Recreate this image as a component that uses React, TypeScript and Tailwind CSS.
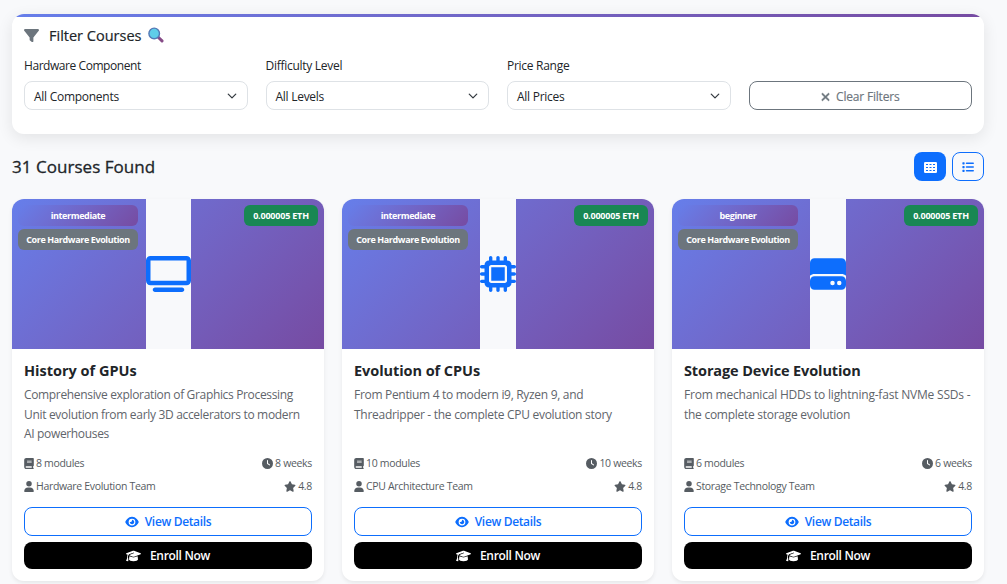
import { FaFilter, FaXmark, FaList, FaBook, FaClock, FaUser, FaStar, FaEye, FaGraduationCap, FaMicrochip, FaHardDrive, FaTv } from "react-icons/fa6";
import type { ReactNode } from "react";

type Course = {
  title: string;
  titleClass: string;
  lines: { text: string; className: string }[];
  level: string;
  modules: string;
  weeks: string;
  team: string;
  icon: ReactNode;
};

const courses: Course[] = [
  {
    title: "History of GPUs",
    titleClass: "tracking-normal",
    lines: [
      { text: "Comprehensive exploration of Graphics Processing", className: "tracking-[-0.34px]" },
      { text: "Unit evolution from early 3D accelerators to modern", className: "tracking-[-0.32px]" },
      { text: "AI powerhouses", className: "tracking-[-0.34px]" },
    ],
    level: "intermediate",
    modules: "8 modules",
    weeks: "8 weeks",
    team: "Hardware Evolution Team",
    icon: <FaTv className="h-9 w-[45px]" />,
  },
  {
    title: "Evolution of CPUs",
    titleClass: "tracking-[-0.06px]",
    lines: [
      { text: "From Pentium 4 to modern i9, Ryzen 9, and", className: "tracking-[-0.31px]" },
      { text: "Threadripper - the complete CPU evolution story", className: "tracking-[-0.28px]" },
    ],
    level: "intermediate",
    modules: "10 modules",
    weeks: "10 weeks",
    team: "CPU Architecture Team",
    icon: <FaMicrochip className="h-9 w-9" />,
  },
  {
    title: "Storage Device Evolution",
    titleClass: "tracking-[-0.12px]",
    lines: [
      { text: "From mechanical HDDs to lightning-fast NVMe SSDs -", className: "tracking-[-0.2px]" },
      { text: "the complete storage evolution", className: "tracking-[-0.27px]" },
    ],
    level: "beginner",
    modules: "6 modules",
    weeks: "6 weeks",
    team: "Storage Technology Team",
    icon: <FaHardDrive className="h-9 w-9" />,
  },
];

function Select({ label, value, labelClass }: { label: string; value: string; labelClass: string }) {
  return (
    <div className="flex-1">
      <div className={`h-[24px] text-[12px] leading-[18px] ${labelClass}`}>{label}</div>
      <div className="flex h-[29px] items-center justify-between rounded-lg border border-[#dee2e6] bg-white px-[9px] text-[12px] tracking-[-0.27px]">
        <span className="pt-[2px]">{value}</span>
        <svg viewBox="0 0 16 16" className="mr-[1px] h-[10px] w-[10px]" fill="none" stroke="#343a40" strokeWidth="2" strokeLinecap="round" strokeLinejoin="round">
          <path d="m2 5 6 6 6-6" />
        </svg>
      </div>
    </div>
  );
}

function CourseCard({ course }: { course: Course }) {
  return (
    <article className="h-[382px] overflow-hidden rounded-xl bg-white shadow-[0_2px_4px_rgba(0,0,0,0.075)]">
      <div className="relative flex h-[150px] items-stretch justify-center bg-linear-135 from-[#667eea] to-[#764ba2]">
        <div className="flex items-center bg-[#f8f9fb] pb-px text-[#0d6efd]">{course.icon}</div>
        <div className="absolute top-[6px] left-[6px] flex w-[120px] flex-col gap-[3px] text-center text-[9px] leading-[21px] font-bold tracking-[-0.39px] text-white">
          <span className="rounded-md bg-linear-135 from-[#667eea] to-[#764ba2]">{course.level}</span>
          <span className="rounded-md bg-[#6c757d] whitespace-nowrap">Core Hardware Evolution</span>
        </div>
        <span className="absolute top-[6px] right-[6px] w-[74px] rounded-md bg-[#198754] text-center text-[9px] leading-[21px] font-bold tracking-[-0.2px] whitespace-nowrap text-white">0.000005 ETH</span>
      </div>
      <div className="px-3 pt-3">
        <h3 className={`text-[14.5px] leading-[19px] font-bold ${course.titleClass}`}>{course.title}</h3>
        <p className="mt-[5px] h-[60px] text-[12px] leading-[19.5px] text-[#5f656b]">
          {course.lines.map((line) => (
            <span key={line.text} className={`block whitespace-nowrap ${line.className}`}>{line.text}</span>
          ))}
        </p>
        <div className="mt-[10px] flex flex-col gap-[6px] text-[10.5px] leading-[17px] tracking-[-0.32px] text-[#565c62]">
          <div className="flex justify-between">
            <span className="flex items-center gap-[2px]"><FaBook className="h-[11px] w-[10px]" />{course.modules}</span>
            <span className="flex items-center gap-[2px]"><FaClock className="h-[11px] w-[11px]" />{course.weeks}</span>
          </div>
          <div className="flex justify-between">
            <span className="flex items-center gap-[2px]"><FaUser className="h-[11px] w-[10px]" />{course.team}</span>
            <span className="flex items-center gap-[2px]"><FaStar className="h-[11px] w-[12px]" />4.8</span>
          </div>
        </div>
        <button className="mt-3 flex h-[29px] w-full items-center justify-center gap-[6px] rounded-lg border border-[#0d6efd] text-[12px] font-semibold tracking-[-0.34px] text-[#0d6efd]">
          <FaEye className="h-3 w-[14px]" />View Details
        </button>
        <button className="mt-[6px] flex h-[27px] w-full items-center justify-center gap-[9px] rounded-lg bg-black text-[12px] font-semibold tracking-[-0.3px] text-white">
          <FaGraduationCap className="h-3 w-[15px]" />Enroll Now
        </button>
      </div>
    </article>
  );
}

export default function App() {
  return (
    <main className="h-[584px] w-[1007px] overflow-hidden bg-[#f8f9fb] pt-[14px] pr-[23px] pl-3 font-['Open_Sans','Noto_Sans',sans-serif] text-[#212529]">
      <section className="h-[120px] overflow-hidden rounded-xl bg-white shadow-[0_4px_16px_rgba(0,0,0,0.09)]">
        <div className="h-[3px] bg-linear-to-r from-[#667eea] to-[#764ba2]" />
        <div className="px-3 pt-[8px]">
          <h2 className="flex h-[20px] items-center text-[14.5px] font-medium">
            <FaFilter className="h-[15px] w-[15px] text-[#6c757d]" />
            <span className="ml-[10px] pt-px [-webkit-text-stroke:0.2px]">Filter Courses</span>
            <svg viewBox="0 0 16 16" className="ml-[7px] h-4 w-4">
              <path d="m10 10 4 3.9" stroke="#864b87" strokeWidth="3" strokeLinecap="round" />
              <circle cx="6.2" cy="6.4" r="5.3" fill="#5fcde9" stroke="#5579b6" strokeWidth="1.4" />
            </svg>
          </h2>
          <div className="mt-[12px] flex gap-[18px]">
            <Select label="Hardware Component" value="All Components" labelClass="tracking-[-0.44px]" />
            <Select label="Difficulty Level" value="All Levels" labelClass="tracking-[-0.28px]" />
            <Select label="Price Range" value="All Prices" labelClass="tracking-[-0.28px]" />
            <div className="flex-1 pt-6">
              <button className="flex h-[29px] w-full items-center justify-center gap-[6px] rounded-lg border border-[#6c757d] pt-[2px] text-[12px] font-medium tracking-[-0.2px] text-[#6c757d]">
                <FaXmark className="h-3 w-[9px] stroke-current stroke-[20px]" />
                <span className="[-webkit-text-stroke:0.15px]">Clear Filters</span>
              </button>
            </div>
          </div>
        </div>
      </section>
      <div className="mt-[18px] flex h-[29px] items-center justify-between">
        <h1 className="text-[17px] font-medium tracking-[0.04px] [-webkit-text-stroke:0.3px]">31 Courses Found</h1>
        <div className="flex gap-[6px]">
          <button className="flex h-[29px] w-8 items-center justify-center rounded-lg bg-[#0d6efd] text-white">
            <svg viewBox="0 0 13 11" className="mt-px h-[11px] w-[13px]">
              <rect width="13" height="11" rx="1.3" fill="white" />
              <path d="M2 2.5h2m1.5 0h2m1.5 0h2M2 5.5h2m1.5 0h2m1.5 0h2M2 8.5h2m1.5 0h2m1.5 0h2" stroke="#0d6efd" strokeWidth="1" />
            </svg>
          </button>
          <button className="flex h-[29px] w-8 items-center justify-center rounded-lg border border-[#0d6efd] pt-px text-[#0d6efd]">
            <FaList className="h-3 w-3" />
          </button>
        </div>
      </div>
      <div className="mt-[18px] grid grid-cols-3 gap-[18px]">
        {courses.map((course) => (
          <CourseCard key={course.title} course={course} />
        ))}
      </div>
    </main>
  );
}
